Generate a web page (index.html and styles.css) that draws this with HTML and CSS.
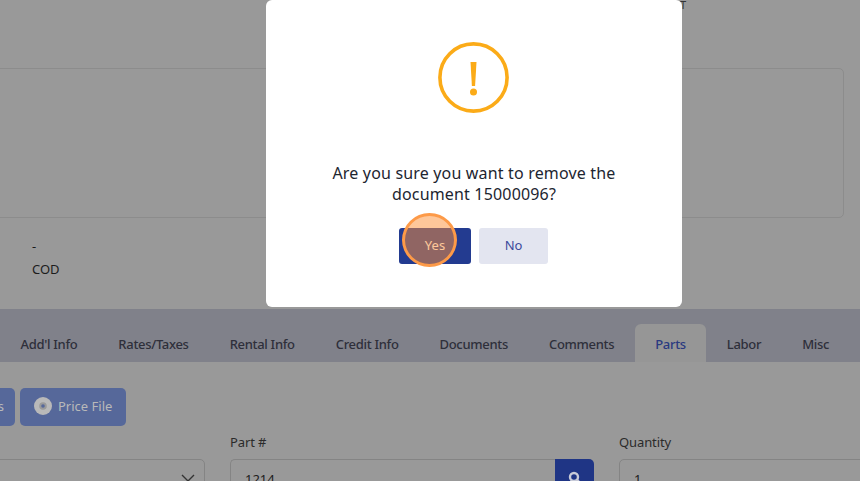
FILE: index.html
```html
<!DOCTYPE html>
<html lang="en">
<head>
    <meta charset="UTF-8">
    <meta name="viewport" content="width=device-width, initial-scale=1.0">
    <title>Remove document</title>
    <link rel="stylesheet" href="styles.css">
</head>
<body>
    <div class="page">
        <div class="top-line">T</div>
        <div class="summary-box"></div>
        <div class="summary-info">
            <div>-</div>
            <div>COD</div>
        </div>
        <div class="tabs">
            <a href="#">Add'l Info</a>
            <a href="#">Rates/Taxes</a>
            <a href="#">Rental Info</a>
            <a href="#">Credit Info</a>
            <a href="#">Documents</a>
            <a href="#">Comments</a>
            <a href="#" class="active">Parts</a>
            <a href="#">Labor</a>
            <a href="#">Misc</a>
        </div>
        <div class="toolbar">
            <button class="tool-btn cut-btn"><span>s</span></button>
            <button class="tool-btn">
                <svg width="18" height="18" viewBox="0 0 18 18">
                    <circle cx="9" cy="9" r="9" fill="#b9b9b9"/>
                    <circle cx="9" cy="9" r="3.8" fill="#9a9a9a"/>
                    <circle cx="9" cy="9" r="1.8" fill="#56689a"/>
                </svg>
                Price File
            </button>
        </div>
        <div class="form-row">
            <div class="field select-field">
                <label>&nbsp;</label>
                <div class="input">
                    <svg class="chevron" width="14" height="8" viewBox="0 0 14 8"><path d="M1 1l6 6 6-6" fill="none" stroke="#333" stroke-width="1.4"/></svg>
                </div>
            </div>
            <div class="field part-field">
                <label>Part #</label>
                <div class="input-group">
                    <div class="input">1214</div>
                    <button class="search-btn">
                        <svg width="14" height="14" viewBox="0 0 14 14"><circle cx="6" cy="6" r="4" fill="none" stroke="#c8cbd8" stroke-width="2.4"/><path d="M9 9l4 4" stroke="#c8cbd8" stroke-width="2.6"/></svg>
                    </button>
                </div>
            </div>
            <div class="field qty-field">
                <label>Quantity</label>
                <div class="input">1</div>
            </div>
        </div>
    </div>

    <div class="modal">
        <svg class="warn-icon" width="72" height="72" viewBox="0 0 72 72">
            <circle cx="35.5" cy="35.5" r="33.6" fill="none" stroke="#fbab18" stroke-width="3.6"/>
            <path d="M32.5 20h6l-1.4 24h-3.2z" fill="#fbab18"/>
            <circle cx="35.5" cy="50" r="3.5" fill="#fbab18"/>
        </svg>
        <p class="message">Are you sure you want to remove the document 15000096?</p>
        <div class="modal-actions">
            <button class="btn-yes">Yes</button>
            <button class="btn-no">No</button>
        </div>
    </div>

    <div class="click-marker"></div>
</body>
</html>
```

FILE: styles.css
```css
html, body {
    margin: 0;
    height: 100%;
    overflow: hidden;
}
body {
    background: #999;
    font-family: "Noto Sans", "Open Sans", sans-serif;
    color: #1c1c1c;
}
.page {
    height: 481px;
    overflow: hidden;
}
.top-line {
    height: 68px;
    padding-left: 680px;
    font-size: 11px;
    line-height: 10px;
    color: #333;
}
.summary-box {
    margin-left: -20px;
    width: 864px;
    height: 150px;
    border: 1px solid #8c8c8c;
    border-radius: 5px;
    box-sizing: border-box;
}
.summary-info {
    padding: 17px 0 0 32px;
    height: 74px;
    font-size: 13px;
    line-height: 23px;
}
.tabs {
    display: flex;
    height: 53px;
    align-items: flex-end;
    background: #80818a;
}
.tabs a {
    padding: 0 20.5px;
    height: 38px;
    line-height: 40px;
    font-size: 13px;
    font-weight: 500;
    letter-spacing: -0.31px;
    color: #2e2f3a;
    text-decoration: none;
    white-space: nowrap;
}
.tabs a.active {
    background: #969696;
    border-radius: 6px 6px 0 0;
    color: #2a3a80;
}
.toolbar {
    display: flex;
    gap: 5px;
    margin-top: 26px;
    margin-left: -40px;
}
.tool-btn {
    display: flex;
    align-items: center;
    gap: 6px;
    height: 38px;
    padding: 0 14px 2px;
    border: 0;
    border-radius: 5px;
    background: #56689a;
    color: #b9b9b9;
    font-family: inherit;
    font-size: 13px;
}
.cut-btn {
    width: 55px;
    justify-content: flex-end;
    padding-right: 11px;
}
.form-row {
    display: flex;
    margin-top: 6px;
    margin-left: -60px;
}
.field {
    flex: none;
}
.field label {
    display: block;
    height: 20px;
    font-size: 13px;
    line-height: 20px;
    margin-bottom: 7px;
    letter-spacing: -0.1px;
    color: #2b2b2b;
}
.input {
    height: 40px;
    box-sizing: border-box;
    border: 1px solid #848484;
    border-radius: 5px;
    padding: 9px 14px;
    font-size: 13px;
    line-height: 20px;
    position: relative;
}
.select-field {
    width: 265px;
    margin-right: 25px;
}
.chevron {
    position: absolute;
    right: 9px;
    top: 14px;
}
.part-field {
    width: 364px;
    margin-right: 25px;
}
.input-group {
    display: flex;
}
.input-group .input {
    flex: 1;
    border-radius: 5px 0 0 5px;
    border-right: 0;
}
.search-btn {
    width: 39px;
    height: 40px;
    border: 0;
    border-radius: 0 5px 5px 0;
    background: #1f3585;
    padding: 0;
}
.qty-field {
    width: 300px;
}
.modal {
    position: fixed;
    left: 266px;
    top: 0;
    width: 416px;
    height: 307px;
    box-sizing: border-box;
    padding-top: 42px;
    background: #fff;
    border-radius: 6px;
    text-align: center;
}
.warn-icon {
    display: block;
    margin: 0 auto;
}
.message {
    margin: 49px 50px 0;
    font-size: 16px;
    line-height: 21px;
    letter-spacing: 0.17px;
    color: #1d2530;
}
.modal-actions {
    display: flex;
    justify-content: center;
    gap: 8px;
    margin-top: 23px;
    padding-right: 1px;
}
.modal-actions button {
    height: 36px;
    padding: 0 0 2px;
    border: 0;
    border-radius: 3px;
    font-family: inherit;
    font-size: 13px;
}
.btn-yes {
    width: 72px;
    background: #233b90;
    color: #fff;
}
.btn-no {
    width: 69px;
    background: #e3e5f0;
    color: #3b4a9c;
}
.click-marker {
    position: fixed;
    left: 402px;
    top: 213px;
    width: 55px;
    height: 54px;
    box-sizing: border-box;
    border: 3px solid #fd9a48;
    border-radius: 50%;
    background: rgba(253, 143, 53, 0.5);
}
```
